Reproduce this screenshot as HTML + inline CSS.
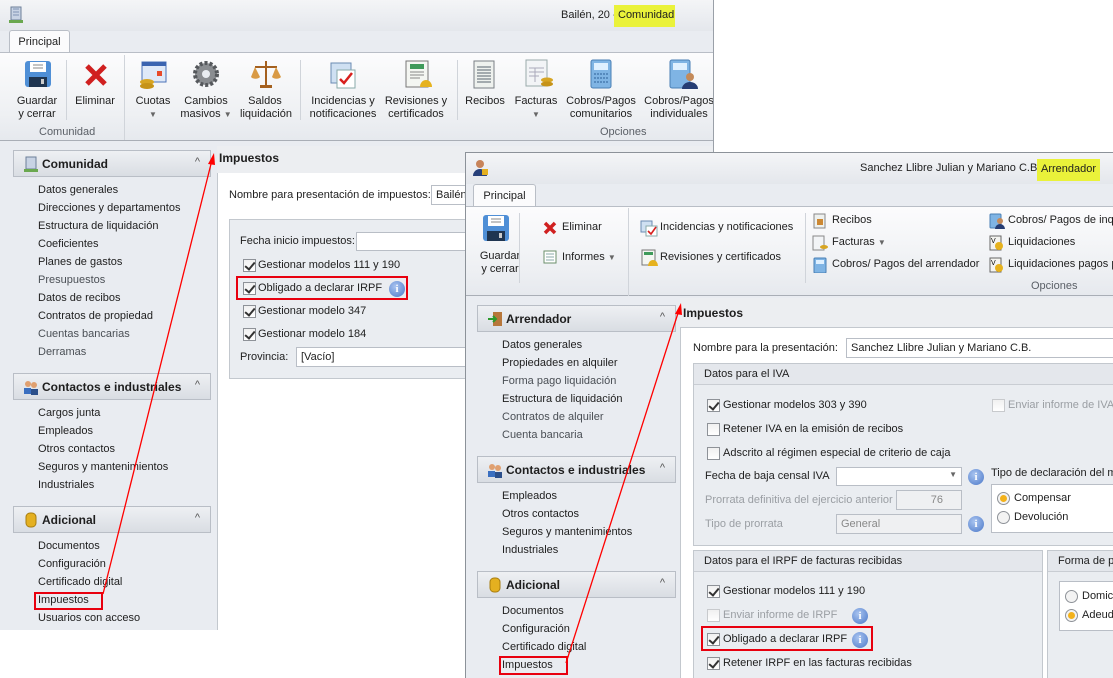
<!DOCTYPE html>
<html><head><meta charset="utf-8"><style>
*{margin:0;padding:0;box-sizing:border-box}
body{width:1113px;height:678px;position:relative;overflow:hidden;background:#fff;font-family:"Liberation Sans",Tahoma,sans-serif;font-size:11px;color:#1e1e1e}
.a{position:absolute;white-space:nowrap}
.win{position:absolute;overflow:hidden;background:#e9ecf1}
.title{position:absolute;left:0;right:0;top:0;height:31px;background:linear-gradient(#f4f5f7,#e4e7ec)}
.tab{position:absolute;background:#fbfbfc;border:1px solid #b9bec6;border-bottom:none;border-radius:3px 3px 0 0;text-align:center;padding-top:5px}
.rib{position:absolute;left:0;right:0;background:linear-gradient(#fcfcfd,#eef0f3 70%,#e6e9ee);border-top:1px solid #b9bec6;border-bottom:1px solid #a9aeb6}
.sep{position:absolute;width:1px;background:#d0d4da}
.lbl{text-align:center;line-height:13px}
.grp{color:#5a5f66}
.nh{position:absolute;height:27px;border:1px solid #b9bec6;background:linear-gradient(#eef0f3,#d9dde3);font-weight:bold;font-size:12px;padding:6px 0 0 28px}
.nh .car{position:absolute;right:10px;top:5px;font-weight:normal;font-size:11px;color:#555}
.nh .ic{position:absolute;left:9px;top:5px;width:16px;height:16px}
.it{position:absolute;white-space:nowrap}
.g{color:#4a4f55}
.cb{position:absolute;width:13px;height:13px;border:1px solid #8e9298;background:linear-gradient(#f0f0f0,#fff)}
.cb.k::after{content:"";position:absolute;left:3px;top:0px;width:4px;height:8px;border:solid #333;border-width:0 2px 2px 0;transform:rotate(40deg)}
.cb.d{border-color:#c8cacd}
.info{position:absolute;width:16px;height:16px;border-radius:50%;background:radial-gradient(circle at 40% 35%,#a9c4f0,#4b78c8);color:#fff;font-weight:bold;font-size:11px;text-align:center;line-height:16px;font-family:"Liberation Serif",serif}
.inp{position:absolute;background:#fff;border:1px solid #b9bec6;height:20px;padding:3px 4px}
.red{position:absolute;border:2px solid #e8000f}
.gb{position:absolute;border:1px solid #c3c8ce;background:#eaedf1}
.gbh{position:absolute;left:0;right:0;top:0;height:21px;border-bottom:1px solid #c9cdd3;background:#e4e7ec;padding:4px 0 0 10px}
.rad{position:absolute;width:13px;height:13px;border-radius:50%;border:1px solid #8e9298;background:#f3f3f3}
.rad.on::after{content:"";position:absolute;left:2px;top:2px;width:7px;height:7px;border-radius:50%;background:#f3b21c}
.hl{background:#eaf23a}
</style></head><body>

<!-- BACK WINDOW -->
<div class="win" style="left:0;top:0;width:714px;height:630px;border-right:1px solid #9aa0a8">
 <div class="title"></div>
 <svg class="a" style="left:8px;top:6px" width="16" height="18"><rect x="3" y="1" width="10" height="13" fill="#c8d3e4" stroke="#6d7f99"/><path d="M5 3h6M5 6h6M5 9h6" stroke="#7f93b3"/><rect x="1" y="14" width="14" height="3" fill="#6aa84f"/></svg>
 <div class="a" style="left:561px;top:9px">Bailén, 20 -</div>
 <div class="a hl" style="left:614px;top:5px;width:61px;height:22px;padding:4px 0 0 4px">Comunidad</div>
 <div class="tab" style="left:9px;top:30px;width:61px;height:23px">Principal</div>
 <div class="rib" style="top:52px;height:89px"></div>
 <svg class="a" style="left:24px;top:60px" width="28" height="28"><rect x="1" y="1" width="26" height="26" rx="3" fill="#4f8fd6"/><rect x="6" y="2" width="16" height="10" fill="#fff"/><path d="M9 5h10M9 8h10" stroke="#888"/><rect x="5" y="17" width="18" height="10" fill="#1f3550"/><rect x="17" y="19" width="3" height="5" fill="#ccc"/></svg>
 <svg class="a" style="left:83px;top:62px" width="26" height="26"><path d="M4 4L22 22M22 4L4 22" stroke="#d02020" stroke-width="5"/></svg>
 <svg class="a" style="left:138px;top:60px" width="30" height="30"><rect x="4" y="2" width="24" height="20" fill="#dfe9f8" stroke="#4b72b8"/><rect x="4" y="2" width="24" height="4" fill="#3b64b0"/><rect x="19" y="11" width="5" height="5" fill="#e84a2a"/><ellipse cx="9" cy="22" rx="7" ry="3" fill="#d7a523"/><ellipse cx="9" cy="26" rx="7" ry="3" fill="#c69318"/></svg>
 <svg class="a" style="left:190px;top:58px" width="32" height="32"><circle cx="16" cy="16" r="11" fill="#8a8d91" stroke="#55585c" stroke-width="4" stroke-dasharray="3 2"/><circle cx="16" cy="16" r="4" fill="#e9ecf1"/></svg>
 <svg class="a" style="left:250px;top:58px" width="32" height="32"><path d="M16 3V28M5 9H27" stroke="#a4601f" stroke-width="2"/><path d="M1 19a5 3 0 0 0 9 0L5 9zM22 19a5 3 0 0 0 9 0L26 9z" fill="#d99a45"/><rect x="10" y="27" width="12" height="3" fill="#a4601f"/></svg>
 <svg class="a" style="left:327px;top:58px" width="32" height="32"><rect x="4" y="5" width="20" height="20" fill="#cfe0f2" stroke="#6b8bb3"/><rect x="10" y="12" width="18" height="18" fill="#fff" stroke="#8aa"/><path d="M13 21l4 4 8-10" stroke="#d8201e" stroke-width="2.5" fill="none"/></svg>
 <svg class="a" style="left:402px;top:58px" width="32" height="32"><rect x="4" y="3" width="22" height="26" fill="#f4f6f2" stroke="#777"/><rect x="8" y="6" width="14" height="5" fill="#3f9a5a"/><path d="M8 14h14M8 17h14M8 20h10" stroke="#888"/><path d="M18 29a6 7 0 0 1 12 0z" fill="#e6b21e"/></svg>
 <svg class="a" style="left:472px;top:60px" width="24" height="30"><rect x="2" y="1" width="20" height="27" fill="#eef1ee" stroke="#7a7f85"/><path d="M5 7h14M5 10h14M5 13h14M5 16h14M5 19h14M5 22h14" stroke="#58646e"/></svg>
 <svg class="a" style="left:524px;top:59px" width="30" height="30"><rect x="2" y="1" width="21" height="26" fill="#f2f4f6" stroke="#9aa"/><path d="M5 9h15M5 13h15M5 17h10M11 9v14" stroke="#aab"/><ellipse cx="23" cy="21" rx="6" ry="2.5" fill="#d7a523"/><ellipse cx="23" cy="25" rx="6" ry="2.5" fill="#c69318"/></svg>
 <svg class="a" style="left:589px;top:59px" width="24" height="30"><rect x="2" y="1" width="20" height="28" rx="2" fill="#7fb4e4" stroke="#4a7fb5"/><rect x="5" y="4" width="14" height="7" fill="#dff0ff"/><path d="M5 15h14M5 19h14M5 23h14" stroke="#2c5f98" stroke-dasharray="2 1"/></svg>
 <svg class="a" style="left:668px;top:59px" width="30" height="30"><rect x="2" y="1" width="20" height="28" rx="2" fill="#7fb4e4" stroke="#4a7fb5"/><rect x="5" y="4" width="14" height="7" fill="#dff0ff"/><circle cx="22" cy="18" r="4" fill="#c48a5a"/><path d="M14 30a8 7 0 0 1 16 0z" fill="#263d73"/></svg>
 <div class="a lbl" style="left:14px;top:95px;width:46px">Guardar<br>y cerrar</div>
 <div class="a lbl" style="left:71px;top:95px;width:48px">Eliminar</div>
 <div class="a lbl" style="left:130px;top:95px;width:46px">Cuotas<br><span style="font-size:8px;color:#666">▼</span></div>
 <div class="a lbl" style="left:176px;top:95px;width:60px">Cambios<br>masivos <span style="font-size:8px;color:#666">▼</span></div>
 <div class="a lbl" style="left:240px;top:95px;width:50px">Saldos<br>liquidación</div>
 <div class="a lbl" style="left:306px;top:95px;width:74px">Incidencias y<br>notificaciones</div>
 <div class="a lbl" style="left:382px;top:95px;width:68px">Revisiones y<br>certificados</div>
 <div class="a lbl" style="left:462px;top:95px;width:46px">Recibos</div>
 <div class="a lbl" style="left:510px;top:95px;width:52px">Facturas<br><span style="font-size:8px;color:#666">▼</span></div>
 <div class="a lbl" style="left:563px;top:95px;width:76px">Cobros/Pagos<br>comunitarios</div>
 <div class="a lbl" style="left:640px;top:95px;width:78px">Cobros/Pagos<br>individuales</div>
 <div class="a grp" style="left:39px;top:126px">Comunidad</div>
 <div class="a grp" style="left:600px;top:126px">Opciones</div>
 <div class="sep" style="left:66px;top:60px;height:60px"></div>
 <div class="sep" style="left:124px;top:55px;height:85px"></div>
 <div class="sep" style="left:300px;top:60px;height:60px"></div>
 <div class="sep" style="left:457px;top:60px;height:60px"></div>
 <div class="nh" style="left:13px;top:150px;width:198px"><svg class="ic" viewBox="0 0 16 16"><rect x="3" y="1" width="10" height="12" fill="#c8d3e4" stroke="#6d7f99"/><rect x="1" y="13" width="14" height="3" fill="#6aa84f"/></svg>Comunidad<span class="car">^</span></div>
 <div class="it" style="left:38px;top:184px">Datos generales</div>
 <div class="it" style="left:38px;top:202px">Direcciones y departamentos</div>
 <div class="it" style="left:38px;top:220px">Estructura de liquidación</div>
 <div class="it" style="left:38px;top:238px">Coeficientes</div>
 <div class="it" style="left:38px;top:256px">Planes de gastos</div>
 <div class="it g" style="left:38px;top:274px">Presupuestos</div>
 <div class="it" style="left:38px;top:292px">Datos de recibos</div>
 <div class="it" style="left:38px;top:310px">Contratos de propiedad</div>
 <div class="it g" style="left:38px;top:328px">Cuentas bancarias</div>
 <div class="it g" style="left:38px;top:346px">Derramas</div>
 <div class="nh" style="left:13px;top:373px;width:198px"><svg class="ic" viewBox="0 0 16 16"><circle cx="5" cy="5" r="3" fill="#e0a070"/><circle cx="11" cy="6" r="3" fill="#e0a070"/><rect x="1" y="9" width="7" height="6" fill="#3a6fc0"/><rect x="8" y="10" width="7" height="6" fill="#2b4f8a"/></svg>Contactos e industriales<span class="car">^</span></div>
 <div class="it" style="left:38px;top:407px">Cargos junta</div>
 <div class="it" style="left:38px;top:425px">Empleados</div>
 <div class="it" style="left:38px;top:443px">Otros contactos</div>
 <div class="it" style="left:38px;top:461px">Seguros y mantenimientos</div>
 <div class="it" style="left:38px;top:479px">Industriales</div>
 <div class="nh" style="left:13px;top:506px;width:198px"><svg class="ic" viewBox="0 0 16 16"><rect x="3" y="1" width="10" height="14" rx="4" fill="#e4b020" stroke="#a77d10"/></svg>Adicional<span class="car">^</span></div>
 <div class="it" style="left:38px;top:540px">Documentos</div>
 <div class="it" style="left:38px;top:558px">Configuración</div>
 <div class="it" style="left:38px;top:576px">Certificado digital</div>
 <div class="it" style="left:38px;top:594px">Impuestos</div>
 <div class="it" style="left:38px;top:612px">Usuarios con acceso</div>
 <div class="red" style="left:34px;top:592px;width:69px;height:18px"></div>
 <div class="a" style="left:217px;top:146px;width:500px;height:27px;background:#eceef1"></div>
 <div class="a" style="left:219px;top:151px;font-weight:bold;font-size:12px">Impuestos</div>
 <div class="a" style="left:217px;top:173px;width:500px;height:460px;background:#fff;border-left:1px solid #c3c8ce"></div>
 <div class="a" style="left:229px;top:189px">Nombre para presentación de impuestos:</div>
 <div class="inp" style="left:431px;top:185px;width:60px">Bailén,</div>
 <div class="gb" style="left:229px;top:219px;width:280px;height:160px"></div>
 <div class="a" style="left:240px;top:235px">Fecha inicio impuestos:</div>
 <div class="inp" style="left:356px;top:232px;width:130px;height:19px"></div>
 <div class="cb k" style="left:243px;top:259px"></div><div class="a" style="left:258px;top:259px">Gestionar modelos 111 y 190</div>
 <div class="cb k" style="left:243px;top:282px"></div><div class="a" style="left:258px;top:282px">Obligado a declarar IRPF</div><div class="info" style="left:389px;top:281px">i</div>
 <div class="red" style="left:236px;top:276px;width:172px;height:24px"></div>
 <div class="cb k" style="left:243px;top:305px"></div><div class="a" style="left:258px;top:305px">Gestionar modelo 347</div>
 <div class="cb k" style="left:243px;top:328px"></div><div class="a" style="left:258px;top:328px">Gestionar modelo 184</div>
 <div class="a" style="left:240px;top:351px">Provincia:</div>
 <div class="inp" style="left:296px;top:347px;width:200px">[Vacío]</div>
</div>

<!-- FRONT WINDOW -->
<div class="win" style="left:465px;top:152px;width:648px;height:526px;border-left:1px solid #8c9299;border-top:1px solid #8c9299">
 <div class="title"></div>
 <svg class="a" style="left:6px;top:6px" width="18" height="18"><circle cx="8" cy="5" r="4" fill="#c8845a"/><path d="M1 17a7 7 0 0 1 14 0z" fill="#27407a"/><rect x="10" y="10" width="6" height="6" fill="#e4b020"/></svg>
 <div class="a" style="left:394px;top:9px">Sanchez Llibre Julian y Mariano C.B. -</div>
 <div class="a hl" style="left:571px;top:6px;width:63px;height:22px;padding:4px 0 0 4px">Arrendador</div>
 <div class="tab" style="left:7px;top:31px;width:63px;height:23px">Principal</div>
 <div class="rib" style="top:53px;height:90px"></div>
 <svg class="a" style="left:16px;top:61px" width="28" height="28"><rect x="1" y="1" width="26" height="26" rx="3" fill="#4f8fd6"/><rect x="6" y="2" width="16" height="10" fill="#fff"/><path d="M9 5h10M9 8h10" stroke="#888"/><rect x="5" y="17" width="18" height="10" fill="#1f3550"/><rect x="17" y="19" width="3" height="5" fill="#ccc"/></svg>
 <div class="a lbl" style="left:6px;top:97px;width:56px">Guardar<br>y cerrar</div>
 <div class="sep" style="left:53px;top:60px;height:70px"></div>
 <svg class="a" style="left:77px;top:68px" width="14" height="14"><path d="M2 2L12 12M12 2L2 12" stroke="#d02020" stroke-width="3.5"/></svg>
 <div class="a" style="left:96px;top:68px">Eliminar</div>
 <svg class="a" style="left:77px;top:97px" width="14" height="14"><rect x="1" y="1" width="12" height="12" fill="#fff" stroke="#6b8f6b"/><path d="M3 4h8M3 7h8M3 10h8" stroke="#8aa"/></svg>
 <div class="a" style="left:96px;top:98px">Informes <span style="font-size:8px;color:#666">▼</span></div>
 <div class="sep" style="left:162px;top:55px;height:88px"></div>
 <svg class="a" style="left:174px;top:66px" width="18" height="18"><rect x="1" y="2" width="11" height="11" fill="#cfe0f2" stroke="#6b8bb3"/><rect x="6" y="7" width="11" height="10" fill="#fff" stroke="#8aa"/><path d="M8 12l3 3 5-7" stroke="#d8201e" stroke-width="1.6" fill="none"/></svg>
 <div class="a" style="left:194px;top:68px">Incidencias y notificaciones</div>
 <svg class="a" style="left:174px;top:96px" width="18" height="18"><rect x="2" y="1" width="13" height="15" fill="#f4f6f2" stroke="#777"/><rect x="4" y="3" width="9" height="3" fill="#3f9a5a"/><path d="M8 17a5 6 0 0 1 10 0z" fill="#e6b21e"/></svg>
 <div class="a" style="left:194px;top:98px">Revisiones y certificados</div>
 <div class="sep" style="left:339px;top:60px;height:70px"></div>
 <svg class="a" style="left:346px;top:60px" width="16" height="16"><rect x="2" y="1" width="11" height="14" fill="#eef1ee" stroke="#888"/><rect x="5" y="6" width="6" height="6" fill="#c83"/></svg>
 <div class="a" style="left:366px;top:61px">Recibos</div>
 <svg class="a" style="left:346px;top:82px" width="16" height="16"><rect x="1" y="1" width="11" height="14" fill="#f2f4f6" stroke="#888"/><ellipse cx="12" cy="12" rx="4" ry="2" fill="#d7a523"/></svg>
 <div class="a" style="left:366px;top:83px">Facturas <span style="font-size:8px;color:#666">▼</span></div>
 <svg class="a" style="left:346px;top:104px" width="16" height="16"><rect x="2" y="1" width="12" height="15" rx="1" fill="#7fb4e4" stroke="#4a7fb5"/><rect x="4" y="3" width="8" height="4" fill="#dff0ff"/></svg>
 <div class="a" style="left:366px;top:105px">Cobros/ Pagos del arrendador</div>
 <svg class="a" style="left:523px;top:60px" width="16" height="16"><rect x="1" y="1" width="11" height="14" rx="1" fill="#7fb4e4" stroke="#4a7fb5"/><circle cx="11" cy="8" r="3" fill="#c48a5a"/><path d="M6 16a5 5 0 0 1 10 0z" fill="#263d73"/></svg>
 <div class="a" style="left:542px;top:61px">Cobros/ Pagos de inqu</div>
 <svg class="a" style="left:523px;top:82px" width="16" height="16"><rect x="1" y="1" width="11" height="14" fill="#f4f4f0" stroke="#666"/><text x="2" y="8" font-size="7" font-family="Liberation Sans">V</text><circle cx="10" cy="11" r="4" fill="#e6b21e"/></svg>
 <div class="a" style="left:542px;top:83px">Liquidaciones</div>
 <svg class="a" style="left:523px;top:104px" width="16" height="16"><rect x="1" y="1" width="11" height="14" fill="#f4f4f0" stroke="#666"/><text x="2" y="8" font-size="7" font-family="Liberation Sans">V</text><circle cx="10" cy="11" r="4" fill="#e6b21e"/></svg>
 <div class="a" style="left:542px;top:105px">Liquidaciones pagos pe</div>
 <div class="a grp" style="left:565px;top:127px">Opciones</div>
 <div class="nh" style="left:11px;top:152px;width:199px"><svg class="ic" viewBox="0 0 16 16"><rect x="6" y="1" width="9" height="14" fill="#b7773a"/><path d="M1 8h8M6 5l3 3-3 3" stroke="#2c9a2c" stroke-width="2" fill="none"/></svg>Arrendador<span class="car">^</span></div>
 <div class="it" style="left:36px;top:186px">Datos generales</div>
 <div class="it" style="left:36px;top:204px">Propiedades en alquiler</div>
 <div class="it g" style="left:36px;top:222px">Forma pago liquidación</div>
 <div class="it" style="left:36px;top:240px">Estructura de liquidación</div>
 <div class="it g" style="left:36px;top:258px">Contratos de alquiler</div>
 <div class="it g" style="left:36px;top:276px">Cuenta bancaria</div>
 <div class="nh" style="left:11px;top:303px;width:199px"><svg class="ic" viewBox="0 0 16 16"><circle cx="5" cy="5" r="3" fill="#e0a070"/><circle cx="11" cy="6" r="3" fill="#e0a070"/><rect x="1" y="9" width="7" height="6" fill="#3a6fc0"/><rect x="8" y="10" width="7" height="6" fill="#2b4f8a"/></svg>Contactos e industriales<span class="car">^</span></div>
 <div class="it" style="left:36px;top:337px">Empleados</div>
 <div class="it" style="left:36px;top:355px">Otros contactos</div>
 <div class="it" style="left:36px;top:373px">Seguros y mantenimientos</div>
 <div class="it" style="left:36px;top:391px">Industriales</div>
 <div class="nh" style="left:11px;top:418px;width:199px"><svg class="ic" viewBox="0 0 16 16"><rect x="3" y="1" width="10" height="14" rx="4" fill="#e4b020" stroke="#a77d10"/></svg>Adicional<span class="car">^</span></div>
 <div class="it" style="left:36px;top:452px">Documentos</div>
 <div class="it" style="left:36px;top:470px">Configuración</div>
 <div class="it" style="left:36px;top:488px">Certificado digital</div>
 <div class="it" style="left:36px;top:506px">Impuestos</div>
 <div class="red" style="left:33px;top:503px;width:69px;height:19px"></div>
 <div class="a" style="left:214px;top:145px;width:440px;height:29px;background:#eceef1"></div>
 <div class="a" style="left:217px;top:153px;font-weight:bold;font-size:12px">Impuestos</div>
 <div class="a" style="left:214px;top:174px;width:440px;height:360px;background:#fff;border-left:1px solid #c3c8ce;border-top:1px solid #c3c8ce"></div>
 <div class="a" style="left:227px;top:189px">Nombre para la presentación:</div>
 <div class="inp" style="left:380px;top:185px;width:280px">Sanchez Llibre Julian y Mariano C.B.</div>
 <div class="gb" style="left:227px;top:210px;width:430px;height:183px"><div class="gbh">Datos para el IVA</div></div>
 <div class="cb k" style="left:241px;top:246px"></div><div class="a" style="left:257px;top:246px">Gestionar modelos 303 y 390</div>
 <div class="cb d" style="left:526px;top:246px"></div><div class="a" style="left:542px;top:246px;color:#9a9ea3">Enviar informe de IVA</div>
 <div class="cb" style="left:241px;top:270px"></div><div class="a" style="left:257px;top:270px">Retener IVA en la emisión de recibos</div>
 <div class="cb" style="left:241px;top:294px"></div><div class="a" style="left:257px;top:294px">Adscrito al régimen especial de criterio de caja</div>
 <div class="a" style="left:239px;top:317px">Fecha de baja censal IVA</div>
 <div class="inp" style="left:370px;top:314px;width:126px;height:19px"><span style="position:absolute;right:4px;top:2px;font-size:8px;color:#666">▼</span></div>
 <div class="info" style="left:502px;top:316px">i</div>
 <div class="a" style="left:525px;top:314px">Tipo de declaración del mo</div>
 <div class="a" style="left:525px;top:331px;width:130px;height:49px;background:#fff;border:1px solid #b9bec6"></div>
 <div class="rad on" style="left:531px;top:339px"></div><div class="a" style="left:548px;top:339px">Compensar</div>
 <div class="rad" style="left:531px;top:358px"></div><div class="a" style="left:548px;top:358px">Devolución</div>
 <div class="a" style="left:239px;top:341px;color:#9a9ea3">Prorrata definitiva del ejercicio anterior</div>
 <div class="inp" style="left:430px;top:337px;width:66px;background:#eff0f2;text-align:right;padding-right:18px;color:#888">76</div>
 <div class="a" style="left:239px;top:365px;color:#9a9ea3">Tipo de prorrata</div>
 <div class="inp" style="left:370px;top:361px;width:126px;background:#eff0f2;color:#888">General</div>
 <div class="info" style="left:502px;top:363px">i</div>
 <div class="gb" style="left:227px;top:397px;width:350px;height:140px"><div class="gbh">Datos para el IRPF de facturas recibidas</div></div>
 <div class="cb k" style="left:241px;top:432px"></div><div class="a" style="left:257px;top:432px">Gestionar modelos 111 y 190</div>
 <div class="cb d" style="left:241px;top:456px"></div><div class="a" style="left:257px;top:456px;color:#9a9ea3">Enviar informe de IRPF</div><div class="info" style="left:386px;top:455px">i</div>
 <div class="cb k" style="left:241px;top:480px"></div><div class="a" style="left:257px;top:480px">Obligado a declarar IRPF</div><div class="info" style="left:386px;top:479px">i</div>
 <div class="red" style="left:235px;top:473px;width:172px;height:25px"></div>
 <div class="cb k" style="left:241px;top:504px"></div><div class="a" style="left:257px;top:504px">Retener IRPF en las facturas recibidas</div>
 <div class="gb" style="left:581px;top:397px;width:80px;height:140px"><div class="gbh">Forma de p</div></div>
 <div class="a" style="left:593px;top:428px;width:70px;height:50px;background:#fff;border:1px solid #b9bec6"></div>
 <div class="rad" style="left:599px;top:437px"></div><div class="a" style="left:616px;top:437px">Domicil</div>
 <div class="rad on" style="left:599px;top:456px"></div><div class="a" style="left:616px;top:456px">Adeud</div>
</div>

<svg class="a" style="left:0;top:0" width="1113" height="678">
 <line x1="103" y1="594" x2="212" y2="160" stroke="#f00" stroke-width="1.3"/>
 <path d="M214 153l-6 11 7 1z" fill="#f00"/>
 <line x1="566" y1="663" x2="679" y2="310" stroke="#f00" stroke-width="1.3"/>
 <path d="M681 303l-6 11 7 1z" fill="#f00"/>
</svg>
</body></html>
